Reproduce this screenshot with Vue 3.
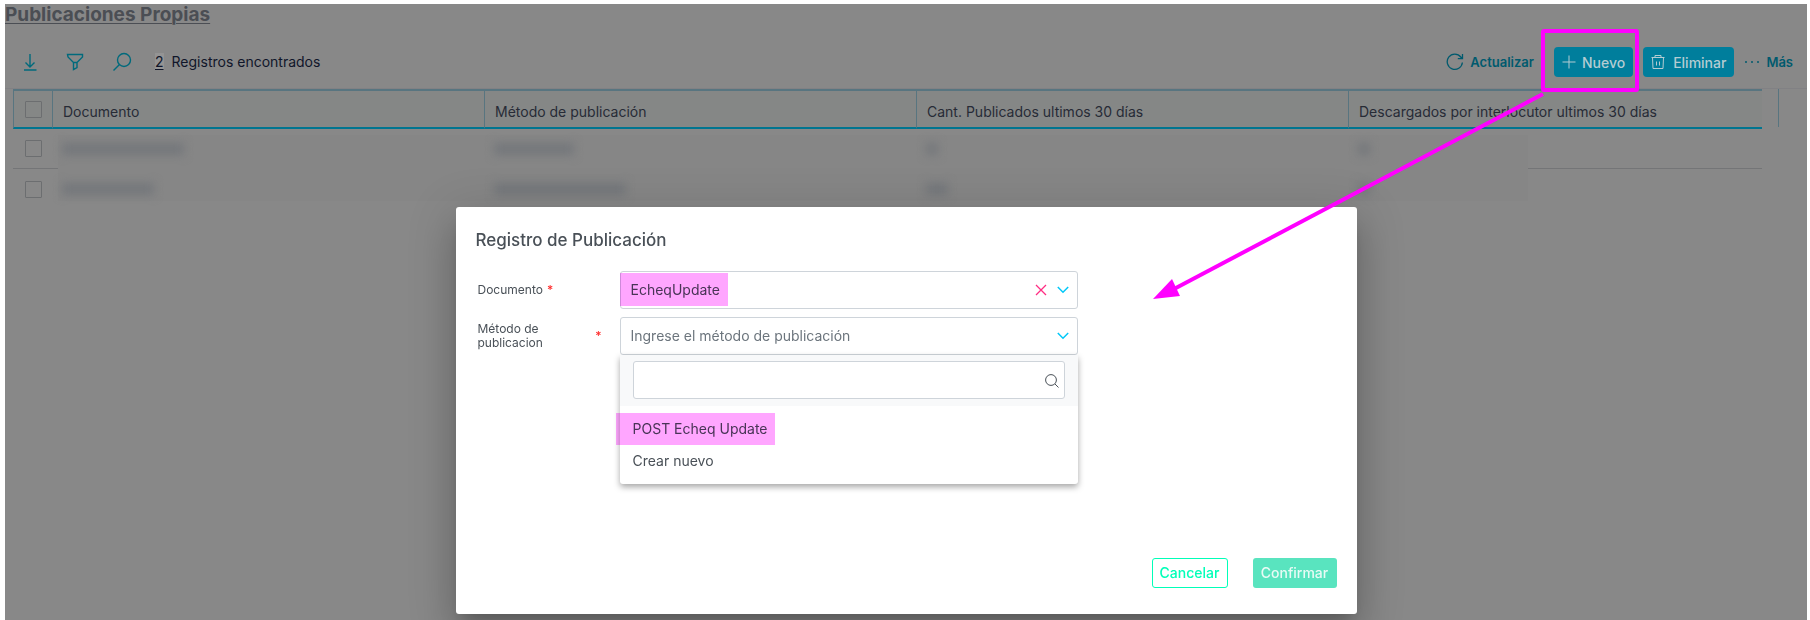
<script setup>
import { ref } from 'vue'

const columns = [
  'Documento',
  'Método de publicación',
  'Cant. Publicados ultimos 30 días',
  'Descargados por interlocutor ultimos 30 días',
]
const rows = [
  { id: 1, masks: [122, 80, 12, 12] },
  { id: 2, masks: [92, 132, 22, 12] },
]
const documento = ref('EcheqUpdate')
const metodo = ref('')
const busqueda = ref('')
const opciones = ['POST Echeq Update', 'Crear nuevo']
</script>

<template>
  <div class="page">
    <h1 class="title"><a href="#">Publicaciones Propias</a></h1>

    <div class="toolbar">
      <div class="tools">
        <button class="icon-btn" type="button" aria-label="Descargar">
          <svg width="16" height="20" viewBox="0 0 16 20"><path d="M8 2v13M3.500 10.500 8 15l4.500-4.500M2 18h12.500" /></svg>
        </button>
        <button class="icon-btn" type="button" aria-label="Filtrar">
          <svg width="18" height="20" viewBox="0 0 18 20"><path d="M1.500 2.500h15v2.500l-5.500 5.500v5l-3.500 2v-7L2 5zM7.500 10.500H11" /></svg>
        </button>
        <button class="icon-btn" type="button" aria-label="Buscar">
          <svg width="20" height="20" viewBox="0 0 20 20"><circle cx="12" cy="8" r="6.500" /><path d="M7.500 12.500 1.500 18.500" /></svg>
        </button>
        <p class="count"><u>2</u> Registros encontrados</p>
      </div>
      <div class="actions">
        <button class="link-btn refresh" type="button">
          <svg width="18" height="18" viewBox="0 0 18 18"><path d="M16.400 9.500A7.600 7.600 0 1 1 14.800 4L16 5.500M16.500 1v4.700h-4.700" /></svg>
          Actualizar
        </button>
        <button class="solid-btn nuevo" type="button">
          <svg width="14" height="14" viewBox="0 0 14 14"><path d="M7 .5v13M.5 7h13" /></svg>
          Nuevo
        </button>
        <button class="solid-btn eliminar" type="button">
          <svg width="14" height="16" viewBox="0 0 14 16"><path d="M.5 3.500h13M4 3.500v-2h6v2M1.500 3.500l.5 11h10l.5-11M5.500 7.500v4M8.500 7.500v4" /></svg>
          Eliminar
        </button>
        <button class="link-btn mas" type="button">
          <svg class="dots" width="16" height="4" viewBox="0 0 16 4"><circle cx="2" cy="2" r="1" /><circle cx="8" cy="2" r="1" /><circle cx="14" cy="2" r="1" /></svg>
          Más
        </button>
      </div>
    </div>

    <div class="grid">
      <table>
        <colgroup>
          <col class="c-check" /><col class="c-data" /><col class="c-data" /><col class="c-data" /><col />
        </colgroup>
        <thead>
          <tr>
            <th><input type="checkbox" aria-label="Seleccionar todo" /></th>
            <th v-for="c in columns" :key="c" scope="col">{{ c }}</th>
          </tr>
        </thead>
        <tbody>
          <tr v-for="r in rows" :key="r.id">
            <td><input type="checkbox" :aria-label="'Seleccionar fila ' + r.id" /></td>
            <td v-for="(w, i) in r.masks" :key="i"><span class="mask" :style="{ width: w + 'px' }"></span></td>
          </tr>
        </tbody>
      </table>
      <div class="gutter"></div>
      <div class="redaction"></div>
    </div>

    <div class="overlay">
      <section class="modal" role="dialog" aria-labelledby="dlg-title">
        <h2 id="dlg-title">Registro de Publicación</h2>
        <form class="form" @submit.prevent>
          <div class="row">
            <label for="documento"><span>Documento</span><b>*</b></label>
            <div class="field">
              <select id="documento" v-model="documento">
                <option>EcheqUpdate</option>
              </select>
              <button class="clear" type="button" aria-label="Limpiar">
                <svg width="12" height="12" viewBox="0 0 12 12"><path d="M1 1l10 10M11 1 1 11" /></svg>
              </button>
              <svg class="chevron" width="12" height="8" viewBox="0 0 12 8"><path d="M.8 1 6 6.200 11.200 1" /></svg>
              <span class="marker marker-value"></span>
            </div>
          </div>
          <div class="row">
            <label class="wide" for="metodo"><span>Método de publicacion</span><b>*</b></label>
            <div class="field">
              <select id="metodo" v-model="metodo" class="placeholder">
                <option value="">Ingrese el método de publicación</option>
                <option v-for="o in opciones" :key="o">{{ o }}</option>
              </select>
              <svg class="chevron" width="12" height="8" viewBox="0 0 12 8"><path d="M.8 1 6 6.200 11.200 1" /></svg>
              <div class="dropdown">
                <div class="search">
                  <input v-model="busqueda" type="text" aria-label="Buscar método" />
                  <svg width="14" height="14" viewBox="0 0 14 14"><circle cx="6" cy="6" r="5.400" /><path d="M10 10l3.500 3.500" /></svg>
                </div>
                <ul role="listbox" aria-label="Métodos">
                  <li v-for="(o, i) in opciones" :key="o" role="option">
                    {{ o }}<span v-if="i === 0" class="marker marker-option"></span>
                  </li>
                </ul>
              </div>
            </div>
          </div>
        </form>
        <footer>
          <button class="cancel" type="button">Cancelar</button>
          <button class="confirm" type="button">Confirmar</button>
        </footer>
      </section>
    </div>

    <svg class="annotation" width="492" height="276" viewBox="0 0 492 276" aria-hidden="true">
      <rect x="391" y="4" width="94" height="59" rx="1" />
      <path d="M391 67 22 262" />
      <polygon points="1,272 20,252 28,269" />
    </svg>
  </div>
</template>

<style>
body {
  margin: 0;
  background: #fff;
}
</style>

<style scoped>
* {
  box-sizing: border-box;
}
.page {
  position: relative;
  margin: 4px 3px 0 5px;
  min-height: calc(100vh - 4px);
  background: #888;
  overflow: hidden;
  font-family: Inter, "Liberation Sans", sans-serif;
  font-size: 14px;
  color: #272b36;
}
button,
input,
select {
  font: inherit;
  color: inherit;
  margin: 0;
}
button {
  border: 0;
  padding: 0;
  background: none;
  display: flex;
  align-items: center;
}
svg {
  fill: none;
  stroke: currentColor;
  flex: none;
}
.title {
  margin: 0;
  font-size: 19px;
  line-height: 22px;
  font-weight: 700;
}
.title a {
  color: #4b4e54;
  text-underline-offset: 2px;
  text-decoration-thickness: 1px;
}
.toolbar {
  display: flex;
  justify-content: space-between;
  height: 63px;
  padding: 21px 14px 0 17px;
  border-bottom: 1px solid #818184;
}
.tools,
.actions {
  display: flex;
  align-items: center;
  height: 30px;
}
.tools {
  gap: 28px;
}
.icon-btn {
  color: #006a7c;
  stroke-width: 1.4;
}
.count {
  margin: 0 0 2px -5px;
  font-weight: 400;
  color: #10162a;
  display: flex;
  gap: 8px;
}
.count u {
  background: #949494;
  text-underline-offset: 2px;
}
.link-btn {
  color: #005a6e;
  font-size: 13px;
  font-weight: 600;
}
.refresh {
  gap: 6px;
  margin-right: 20px;
}
.refresh svg {
  stroke-width: 1.3;
}
.solid-btn {
  height: 30px;
  border-radius: 4px;
  background: #007e9c;
  color: #b4ccd2;
  font-weight: 500;
  padding: 0 8px;
}
.nuevo {
  margin-right: 10px;
  gap: 6px;
}
.eliminar {
  margin-right: 10px;
  gap: 8px;
}
.mas {
  gap: 6px;
}
.dots {
  fill: currentColor;
  stroke: none;
}
.grid {
  position: relative;
  display: flex;
  margin: 0 28px 0 8px;
}
table {
  flex: 1;
  min-width: 0;
  table-layout: fixed;
  border-collapse: separate;
  border-spacing: 0;
}
.c-check {
  width: 39px;
}
.c-data {
  width: 24.7%;
}
th {
  height: 40px;
  padding: 4px 10px 0;
  text-align: left;
  font-weight: 400;
  background: #858786;
  border-top: 2px solid #587580;
  border-bottom: 2px solid #007590;
  border-left: 1px solid #587580;
}
td {
  height: 40px;
  padding: 0 10px;
}
tbody tr:first-child td {
  border-bottom: 1px solid #747577;
}
th:first-child {
  padding: 0 0 0 11px;
}
td:first-child {
  padding: 0 0 0 12px;
}
input[type='checkbox'] {
  appearance: none;
  display: block;
  width: 17px;
  height: 17px;
  border: 1px solid #6c6e70;
  border-radius: 1px;
}
.mask {
  position: relative;
  z-index: 2;
  display: block;
  height: 12px;
  background: #74777b;
  filter: blur(5px);
}
.gutter {
  width: 17px;
  height: 38px;
  border-right: 1px solid #587580;
}
.redaction {
  position: absolute;
  top: 46px;
  left: 45px;
  right: 251px;
  height: 66px;
  background: #868686;
}
.overlay {
  position: absolute;
  inset: 0;
  z-index: 3;
  padding-top: 203px;
  display: flex;
  justify-content: center;
  align-items: flex-start;
}
.modal {
  width: 50%;
  min-height: 407px;
  padding: 20px;
  display: flex;
  flex-direction: column;
  background: #fff;
  border-radius: 3px;
  box-shadow: 0 11px 15px -7px rgba(0, 0, 0, 0.2), 0 24px 38px 3px rgba(0, 0, 0, 0.14),
    0 9px 46px 8px rgba(0, 0, 0, 0.12);
  color: #495057;
}
h2 {
  margin: 0 0 18px;
  font-size: 17px;
  line-height: 26px;
  font-weight: 500;
}
.form {
  flex: 1;
}
.row {
  display: flex;
  align-items: center;
  margin-bottom: 8px;
}
.row label {
  display: flex;
  align-items: center;
  gap: 4px;
  width: 144px;
  padding: 0 18px 0 2px;
  font-size: 12px;
  line-height: 14px;
}
.row label.wide {
  justify-content: space-between;
}
.row label.wide span {
  width: 80px;
}
.row label b {
  color: #ff2d2d;
  font-weight: 500;
}
.field {
  position: relative;
  width: 458px;
  height: 38px;
  display: flex;
  align-items: center;
  border: 1px solid #ced4da;
  border-radius: 3px;
  padding: 0 8px 0 0;
}
.field select {
  appearance: none;
  flex: 1;
  height: 36px;
  padding: 0 10px 2px;
  border: 0;
  background: none;
}
.field select.placeholder {
  color: #6c757d;
}
.clear {
  color: #ff2d83;
  stroke-width: 1.3;
  margin-right: 10px;
}
.chevron {
  color: #00c8f8;
  stroke-width: 1.5;
}
.marker {
  position: absolute;
  background: #ffa6ff;
  mix-blend-mode: multiply;
  pointer-events: none;
}
.marker-value {
  left: -1px;
  top: 1px;
  bottom: 2px;
  width: 108px;
}
.marker-option {
  left: -4px;
  top: 0;
  bottom: 0;
  width: 159px;
}
.dropdown {
  position: absolute;
  top: 37px;
  left: -1px;
  right: -1px;
  background: #fff;
  border-radius: 0 0 3px 3px;
  box-shadow: 0 3px 6px rgba(0, 0, 0, 0.35);
}
.search {
  position: relative;
  padding: 6px 13px 7px;
  background: #f8f9fa;
}
.search input {
  display: block;
  width: 100%;
  height: 38px;
  padding: 0 32px 0 10px;
  border: 1px solid #ced4da;
  border-radius: 3px;
  background: #fff;
}
.search svg {
  position: absolute;
  right: 19px;
  top: 19px;
}
ul {
  list-style: none;
  margin: 0;
  padding: 7px 0;
}
li {
  position: relative;
  padding: 0 13px;
  line-height: 32px;
}
footer {
  display: flex;
  justify-content: flex-end;
  gap: 25px;
  padding-bottom: 6px;
}
footer button {
  height: 30px;
  padding-bottom: 2px;
  justify-content: center;
  border-radius: 3px;
  font-weight: 500;
}
.cancel {
  width: 76px;
  border: 1px solid #00ffb8;
  color: #00ffb8;
}
.confirm {
  width: 84px;
  background: #59e4bf;
  color: #e8fbf5;
}
.annotation {
  position: absolute;
  top: 23px;
  right: 163px;
  z-index: 4;
  stroke: #f0f;
  stroke-width: 4;
  pointer-events: none;
}
.annotation polygon {
  fill: #f0f;
  stroke: none;
}
</style>
